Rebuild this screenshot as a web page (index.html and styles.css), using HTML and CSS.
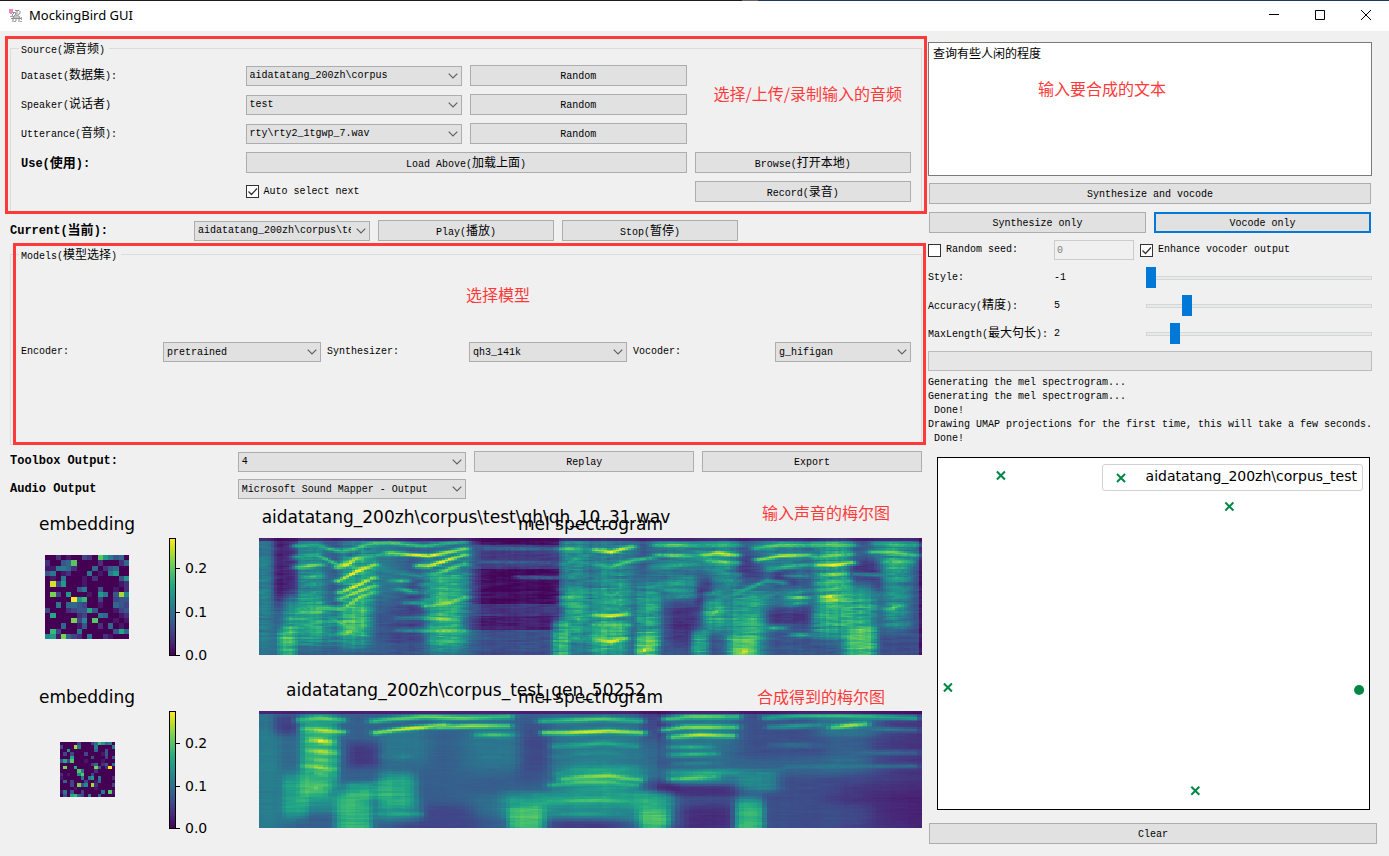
FILE: index.html
```html
<!DOCTYPE html>
<html lang="zh-CN">
<head>
<meta charset="utf-8">
<title>MockingBird GUI</title>
<link rel="stylesheet" href="styles.css">
</head>
<body>
<header class="titlebar">
  <svg class="app-icon" width="14" height="14" viewBox="0 0 14 14" aria-hidden="true">
    <g fill="none" stroke="#8c8c8c">
      <path d="M4 3.5h2M6 1.5h4l1 1v2l-2 1M3 6l3-3 1 2-3 3zM5 7h5l1 2H4zM4 10v3M7 9v3M10 9v4M2 9.500h10M8 2v5"/>
    </g>
    <path d="M1 7h2v1H1zM12 8h1v3h-1zM5 12h2v1H5zM11 12h2v1h-2z" fill="#a5a5a5"/>
    <path d="M0 0h4v4H0z" fill="#f285c0"/><path d="M1 4h2v1H1z" fill="#c9a0b8"/>
  </svg>
  <h1>MockingBird GUI</h1>
  <div class="window-buttons">
    <button type="button" aria-label="Minimize"><svg width="10" height="10"><path d="M0 4.500h10"/></svg></button>
    <button type="button" aria-label="Maximize"><svg width="10" height="10"><path d="M.5.5h9v9h-9z"/></svg></button>
    <button type="button" aria-label="Close"><svg width="10" height="10"><path d="M0 0l10 10M10 0L0 10"/></svg></button>
  </div>
</header>

<main class="app">
  <section class="left">
    <div class="marked">
      <fieldset>
        <legend>Source(<span class="zh">源音频</span>)</legend>
        <div class="source-grid">
          <label for="dataset">Dataset(<span class="zh">数据集</span>):</label>
          <select id="dataset"><option>aidatatang_200zh\corpus</option></select>
          <button type="button">Random</button>
          <label class="first" for="speaker">Speaker(<span class="zh">说话者</span>)</label>
          <select id="speaker"><option>test</option></select>
          <button type="button">Random</button>
          <label class="first" for="utterance">Utterance(<span class="zh">音频</span>):</label>
          <select id="utterance"><option>rty\rty2_1tgwp_7.wav</option></select>
          <button type="button">Random</button>
          <strong class="first">Use(<span class="zh">使用</span>):</strong>
          <button type="button" class="wide">Load Above(<span class="zh">加载上面</span>)</button>
          <button type="button">Browse(<span class="zh">打开本地</span>)</button>
          <label class="check second"><input type="checkbox" checked>Auto select next</label>
          <button type="button" class="fourth">Record(<span class="zh">录音</span>)</button>
        </div>
      </fieldset>
      <div class="frame frame-source"></div>
      <p class="note note-source">选择/上传/录制输入的音频</p>
    </div>

    <div class="current-grid">
      <label for="current"><strong>Current(<span class="zh">当前</span>):</strong></label>
      <select id="current"><option>aidatatang_200zh\corpus\test</option></select>
      <button type="button">Play(<span class="zh">播放</span>)</button>
      <button type="button">Stop(<span class="zh">暂停</span>)</button>
    </div>

    <div class="marked">
      <fieldset class="models">
        <legend>Models(<span class="zh">模型选择</span>)</legend>
        <div class="models-grid">
          <label for="encoder">Encoder:</label>
          <select id="encoder"><option>pretrained</option></select>
          <label for="synthesizer">Synthesizer:</label>
          <select id="synthesizer"><option>qh3_141k</option></select>
          <label for="vocoder">Vocoder:</label>
          <select id="vocoder"><option>g_hifigan</option></select>
        </div>
      </fieldset>
      <div class="frame frame-models"></div>
      <p class="note note-models">选择模型</p>
    </div>

    <div class="output-grid">
      <label for="toolbox"><strong>Toolbox Output:</strong></label>
      <select id="toolbox"><option>4</option></select>
      <button type="button">Replay</button>
      <button type="button">Export</button>
      <label for="audio"><strong>Audio Output</strong></label>
      <select id="audio"><option>Microsoft Sound Mapper - Output</option></select>
    </div>

    <figure class="plots">
      <h2 class="suptitle">aidatatang_200zh\corpus\test\qh\qh_10_31.wav</h2>
      <h3 class="axes-title">embedding</h3>
      <h3 class="axes-title mel-title">mel spectrogram</h3>
      <canvas class="embedding" id="emb1" width="16" height="16"></canvas>
      <div class="colorbar">
        <span class="tick" style="bottom:75%">0.2</span><span class="tick" style="bottom:37.500%">0.1</span><span class="tick" style="bottom:0%">0.0</span>
      </div>
      <canvas class="mel" id="mel1" width="221" height="80"></canvas>
      <figcaption class="note note-plot">输入声音的梅尔图</figcaption>
    </figure>

    <figure class="plots">
      <h2 class="suptitle">aidatatang_200zh\corpus_test_gen_50252</h2>
      <h3 class="axes-title">embedding</h3>
      <h3 class="axes-title mel-title">mel spectrogram</h3>
      <canvas class="embedding small" id="emb2" width="16" height="16"></canvas>
      <div class="colorbar">
        <span class="tick" style="bottom:73%">0.2</span><span class="tick" style="bottom:36.500%">0.1</span><span class="tick" style="bottom:0%">0.0</span>
      </div>
      <canvas class="mel" id="mel2" width="145" height="80"></canvas>
      <figcaption class="note note-plot note-result">合成得到的梅尔图</figcaption>
    </figure>
  </section>

  <section class="right">
    <div class="controls">
      <div class="prompt">
        <textarea aria-label="Text">查询有些人闲的程度</textarea>
        <p class="note note-text">输入要合成的文本</p>
      </div>
      <div class="actions">
        <button type="button" class="both">Synthesize and vocode</button>
        <button type="button">Synthesize only</button>
        <button type="button" class="default">Vocode only</button>
      </div>
      <div class="options">
        <label class="check"><input type="checkbox">Random seed:</label>
        <input class="seed" type="text" value="0" disabled aria-label="Seed">
        <label class="check"><input type="checkbox" checked>Enhance vocoder output</label>
        <label for="style">Style:</label><output class="number">-1</output>
        <input id="style" type="range" min="-1" max="9" value="-1">
        <label for="accuracy">Accuracy(<span class="zh">精度</span>):</label><output class="number">5</output>
        <input id="accuracy" type="range" min="3" max="15" value="5">
        <label for="maxlen">MaxLength(<span class="zh">最大句长</span>):</label><output class="number">2</output>
        <input id="maxlen" type="range" min="1" max="10" value="2">
      </div>
      <div class="progress" role="progressbar" aria-label="Progress"></div>
    </div>
    <pre class="log">Generating the mel spectrogram...
Generating the mel spectrogram...
 Done!
Drawing UMAP projections for the first time, this will take a few seconds.
 Done!</pre>
    <div class="umap">
      <svg width="100%" height="100%" aria-hidden="true">
        <svg x="14.600%" y="5%"><path d="M-4-4l8 8M4-4l-8 8"/></svg>
        <svg x="67.600%" y="13.800%"><path d="M-4-4l8 8M4-4l-8 8"/></svg>
        <svg x="2.300%" y="65.400%"><path d="M-4-4l8 8M4-4l-8 8"/></svg>
        <svg x="59.700%" y="94.800%"><path d="M-4-4l8 8M4-4l-8 8"/></svg>
        <circle cx="97.700%" cy="66.100%" r="5"/>
      </svg>
      <div class="legend">
        <svg width="10" height="10" aria-hidden="true"><path d="M1 1l8 8M9 1L1 9"/></svg>
        <span>aidatatang_200zh\corpus_test</span>
      </div>
    </div>
    <button type="button">Clear</button>
  </section>
</main>
<script src="plots.js"></script>
</body>
</html>
```
FILE: styles.css
```css
* { box-sizing: border-box; }

body {
  margin: 0;
  min-height: 100vh;
  background: #f0f0f0;
  color: #000;
  font: 10px/14px "Liberation Mono", "Noto Sans CJK SC", monospace;
}

h1, h2, h3, p, pre, figure, fieldset { margin: 0; padding: 0; font-weight: 400; }

.zh { font: 12px/14px "Noto Sans CJK SC", sans-serif; }
strong { font-size: 12px; }
strong .zh { font-size: 13px; font-weight: 700; }

.titlebar {
  display: flex;
  align-items: center;
  height: 31px;
  padding-left: 9px;
  background: #fff;
  border-top: 1px solid;
  border-image: linear-gradient(90deg, #1c1c1c 53.4%, #666 53.4% 54.6%, #1f3a5f 54.6%) 1;
}
.titlebar h1 { flex: 1; margin-left: 6px; padding-bottom: 2px; font: 13px/20px "Noto Sans", sans-serif; }
.window-buttons { display: flex; }
.window-buttons button {
  display: grid;
  place-items: center;
  width: 46px;
  height: 30px;
  padding: 0 0 2px;
  border: 0;
  background: none;
}
.window-buttons path { fill: none; stroke: #000; }

.app {
  display: grid;
  grid-template-columns: 912fr 449fr;
  gap: 6px;
  padding: 10px 12px 11px 10px;
}
.left { display: flex; flex-direction: column; gap: 6px; min-width: 0; }
.right { display: flex; flex-direction: column; min-width: 0; padding: 1px 0; }

button, select {
  min-width: 0;
  width: 100%;
  height: 21px;
  padding: 2px 0 0;
  border: 1px solid #adadad;
  border-radius: 0;
  background: #e1e1e1;
  color: #000;
  font: inherit;
}
select {
  height: 20px;
  padding: 1px 18px 0 3px;
  appearance: none;
  background: #e1e1e1 url("data:image/svg+xml,%3Csvg xmlns='http://www.w3.org/2000/svg' width='10' height='6'%3E%3Cpath d='M.7.7L5 5L9.300.7' fill='none' stroke='%23606060' stroke-width='1.200'/%3E%3C/svg%3E") no-repeat right 3px center;
}
button.default { border: 2px solid #0078d7; }

.marked { position: relative; }
.frame { position: absolute; border: 3px solid #fc3a3a; pointer-events: none; }
.frame-source { inset: -5px -5px 0; }
.frame-models { inset: -4px -4px 0 3px; }
.note {
  position: absolute;
  color: #fc3a3a;
  font: 16px/24px "Noto Sans CJK SC", sans-serif;
  white-space: nowrap;
}
.note-source { top: 40px; right: 20px; }
.note-models { top: 35px; left: 50%; }
.note-plot { top: -5px; right: 32px; }
.note-result { top: 6px; right: 37px; }
.note-text { top: 34px; left: 110px; }

fieldset { min-width: 0; border: 1px solid #dcdcdc; padding: 10px 10px 11px 10px; }
legend { margin-left: -2px; padding: 0 4px 0 2px; height: 14px; line-height: 12px; }
.source-grid {
  display: grid;
  grid-template-columns: repeat(4, 1fr);
  grid-auto-rows: 21px;
  gap: 8px;
  align-items: center;
}
.first { grid-column: 1; }
.second { grid-column: 2; }
.fourth { grid-column: 4; }
.wide { grid-column: 2 / 4; }

.check { display: flex; align-items: center; gap: 5px; }
input[type="checkbox"] {
  appearance: none;
  width: 13px;
  height: 13px;
  margin: 0;
  border: 1px solid #333;
  background: #fff;
}
input[type="checkbox"]:checked {
  background: #fff url("data:image/svg+xml,%3Csvg xmlns='http://www.w3.org/2000/svg' width='11' height='11'%3E%3Cpath d='M1.500 5.500l3 3L10 2.500' fill='none' stroke='%23333' stroke-width='1.300'/%3E%3C/svg%3E") center no-repeat;
}

.current-grid { display: grid; grid-template-columns: repeat(5, 1fr); gap: 8px; align-items: center; }
.models { height: 198px; }
.models-grid {
  display: grid;
  grid-template-columns: 136fr 158fr 136fr 158fr 136fr 136fr;
  gap: 6px;
  align-items: center;
  height: 162px;
}
.output-grid {
  display: grid;
  grid-template-columns: 220fr 229fr 220fr 220fr;
  gap: 7px 8px;
  align-items: center;
}

.plots {
  position: relative;
  display: grid;
  grid-template-columns: 154fr 95fr 663fr;
  grid-template-rows: 20px 117px;
  row-gap: 4px;
  height: 167px;
  padding-top: 9px;
  font-family: "DejaVu Sans", sans-serif;
}
.suptitle {
  position: absolute;
  top: 2px;
  width: 100%;
  text-align: center;
  font-size: 17px;
  line-height: 20px;
}
.axes-title { text-align: center; font-size: 17px; line-height: 20px; }
.mel-title { grid-column: 3; }
canvas { image-rendering: pixelated; }
.embedding { width: 84px; height: 84px; place-self: center; }
.embedding.small { width: 55px; height: 55px; }
.mel { width: 100%; height: 117px; }
.colorbar {
  position: relative;
  width: 7px;
  height: 118px;
  margin-left: 5px;
  border: 1px solid #000;
  background: linear-gradient(0deg, #440154, #482475, #414487, #355f8d, #2a788e, #21918c, #22a884, #44bf70, #7ad151, #bddf26, #fde725);
}
.tick {
  position: absolute;
  left: 15px;
  transform: translateY(50%);
  font-size: 14px;
  line-height: 16px;
}
.tick::before {
  content: "";
  position: absolute;
  top: 8px;
  left: -9px;
  width: 4px;
  height: 1px;
  background: #000;
}

.controls { display: grid; gap: 7px; margin-right: 5px; }
.prompt { position: relative; height: 134px; }
textarea {
  display: block;
  width: 100%;
  height: 100%;
  padding: 2px 4px;
  border: 1px solid #7a7a7a;
  background: #fff;
  color: #000;
  resize: none;
  font: 12px/15px "Noto Sans CJK SC", sans-serif;
}
.actions { display: grid; grid-template-columns: 1fr 1fr; gap: 8px; margin: 0 1px; }
.both { grid-column: 1 / 3; }
.options {
  display: grid;
  grid-template-columns: 120px 80px 1fr;
  grid-template-rows: 20px 21px 21px 21px;
  gap: 7px 6px;
  align-items: center;
  white-space: nowrap;
}
.seed {
  width: 100%;
  height: 20px;
  padding: 0 2px;
  border: 1px solid #ccc;
  background: #f0f0f0;
  color: #838383;
  font: inherit;
}
input[type="range"] {
  appearance: none;
  height: 21px;
  margin: 0 0 0 6px;
  background: none;
}
input[type="range"]::-webkit-slider-runnable-track {
  height: 4px;
  border: 1px solid #d6d6d6;
  background: #e7eaea;
}
input[type="range"]::-webkit-slider-thumb {
  appearance: none;
  width: 10px;
  height: 21px;
  margin: -10px -1px 0;
  background: #0078d7;
}
.progress { height: 20px; border: 1px solid #bcbcbc; background: #e6e6e6; }
.log { margin-top: 5px; font: inherit; }
.umap {
  position: relative;
  flex: 1;
  min-height: 200px;
  margin: 11px 7px 13px 9px;
  border: 1px solid #000;
  background: #fff;
}
.umap > svg { position: absolute; inset: 0; }
.umap svg { overflow: visible; }
.umap path { fill: none; stroke: #008744; stroke-width: 2; }
.umap circle { fill: #008744; }
.legend {
  position: absolute;
  top: 6px;
  right: 6px;
  display: flex;
  align-items: center;
  gap: 20px;
  height: 27px;
  padding: 0 5px 0 13px;
  border: 1px solid #d2d2d2;
  border-radius: 3px;
  font: 14px/20px "DejaVu Sans", sans-serif;
}
.legend span { padding-bottom: 4px; }
.right > button { margin-left: 1px; width: auto; }
```
FILE: plots.js
```js
const VIRIDIS = [
  [68, 1, 84], [72, 36, 117], [65, 68, 135], [53, 95, 141], [42, 120, 142],
  [33, 145, 140], [34, 168, 132], [68, 191, 112], [122, 209, 81], [189, 223, 38], [253, 231, 37]
];

function color(v) {
  const t = Math.max(0, Math.min(0.9999, v)) * 10;
  const i = Math.floor(t), f = t - i;
  return VIRIDIS[i].map((c, k) => c + (VIRIDIS[i + 1][k] - c) * f);
}

function paint(id, value) {
  const canvas = document.getElementById(id);
  const ctx = canvas.getContext("2d");
  const image = ctx.createImageData(canvas.width, canvas.height);
  for (let y = 0; y < canvas.height; y++) {
    for (let x = 0; x < canvas.width; x++) {
      image.data.set([...color(value(x, y)), 255], (y * canvas.width + x) * 4);
    }
  }
  ctx.putImageData(image, 0, 0);
}

const emb1 = [
  "0020100320b86450", "20045b0000200025", "1166520005024500", "4601200060106800",
  "0106000102000048", "0e38000100000012", "0000004600400102", "0c308000108604d7",
  "00000f8a00300344", "0060554300100543", "3000234494000134", "0900002300650012",
  "00000c370b000101", "0005001400205010", "0a30006000000495", "781c532060021000"
];
const emb2 = [
  "00000300035a8560", "3000d60000600006", "0080000000500400", "0303000300001400",
  "0009000004000304", "493b000100001000", "0000000003502405", "0c00900000c402f0",
  "00000b6000200000", "201007b003000000", "1000006068060002", "0503000300150000",
  "00030c470d200003", "0000100000100000", "16040030000060b1", "0409a53070050000"
];
paint("emb1", (x, y) => parseInt(emb1[y][x], 16) / 15);
paint("emb2", (x, y) => parseInt(emb2[y][x], 16) / 15);

function noise(x, y) {
  const s = Math.sin(x * 127.1 + y * 311.7) * 43758.5453;
  return s - Math.floor(s) - 0.5;
}
function smoothNoise(x, y) {
  const i = Math.floor(x), f = x - i;
  return noise(i, y) * (1 - f) + noise(i + 1, y) * f;
}

// areas: [x, y, rx, ry, amount]; lines: [level, x0, y0, x1, y1, ...]
function mel(id, base, grain, thickness, areas, lines) {
  const { width, height } = document.getElementById(id);
  paint(id, (cx, cy) => {
    const x = (cx + 0.5) * 663 / width, y = (cy + 0.5) * 117 / height;
    let v = base(x, y), gain = 0;
    for (const [ax, ay, rx, ry, amount] of areas) {
      const dx = ((x - ax) / rx) ** 2, dy = ((y - ay) / ry) ** 2;
      if (dx < 4 && dy < 4) gain += amount * Math.exp(-0.7 * (dx * dx + dy * dy));
    }
    v += gain > 0 ? (0.82 - v) * (1 - Math.exp(-gain * 1.9)) : gain;
    const loud = Math.min(1, Math.max(0.35, gain * 4));
    v += grain * loud * (1.2 * smoothNoise(cx / 5, cy) + 0.6 * smoothNoise(cx / 11, (cy >> 1) + 40) + 0.5 * noise(cx, 7) + 0.5 * smoothNoise(cx / 2, cy + 90));
    for (const [level, ...p] of lines) {
      const last = p.length - 2;
      if (x < p[0] - 14 || x > p[last] + 14) continue;
      let k = 0;
      while (k < last - 2 && x > p[k + 2]) k += 2;
      const t = Math.max(0, Math.min(1, (x - p[k]) / (p[k + 2] - p[k])));
      const ly = p[k + 1] + (p[k + 3] - p[k + 1]) * t;
      const out = Math.max(0, p[0] - x, x - p[last]);
      const w = Math.exp(-(((y - ly) / thickness) ** 2) - (out / 6) ** 2);
      const place = (x - p[0]) / (p[last] - p[0]);
      const middle = Math.sin(Math.PI * Math.max(0.1, Math.min(0.9, place)));
      v += Math.max(0, level * (0.78 + 0.22 * middle) + 0.5 * grain * noise(cx, cy) - v) * w;
    }
    if (y < 3) v *= 0.3;
    return Math.min(1, Math.max(0.01, v));
  });
}

function ramp(x, from, to) {
  return Math.max(0, Math.min(1, (x - from) / (to - from)));
}

mel("mel1", (x, y) => {
  if (x > 659) return 0.06;
  const quiet = ramp(x, 200, 214) * (1 - ramp(x, 298, 302));
  const floor = y > 92 ? 0.24 : y > 78 ? 0.08 : y > 66 ? 0.16 : y > 30 ? 0.03 : y > 8 ? 0.16 : 0.04;
  const voiced = x < 38 ? 0.32 - 0.22 * ramp(x, 10, 18) * (1 - ramp(y, 55, 80)) : 0.27;
  return voiced + (floor - voiced) * quiet;
}, 0.17, 2.2, [
  [5, 60, 8, 58, 0.12], [28, 106, 8, 14, 0.55], [45, 82, 18, 24, 0.34], [52, 40, 14, 40, 0.2],
  [75, 88, 24, 18, 0.22], [98, 55, 15, 46, 0.38], [97, 84, 12, 17, 0.3], [125, 30, 20, 34, 0.12],
  [187, 74, 17, 36, 0.5], [187, 28, 22, 16, 0.12], [150, 78, 20, 30, -0.06], [211, 50, 10, 60, 0.12],
  [302, 102, 8, 18, 0.42], [316, 20, 12, 22, 0.25], [317, 66, 10, 18, 0.42], [315, 98, 12, 16, 0.26],
  [350, 102, 17, 14, 0.6], [350, 70, 20, 20, 0.3], [352, 28, 22, 28, 0.2], [390, 80, 11, 32, 0.42],
  [388, 110, 10, 12, 0.6], [420, 22, 25, 22, 0.14], [420, 52, 20, 12, 0.14], [425, 86, 14, 22, -0.12],
  [441, 108, 8, 14, 0.45], [455, 74, 10, 18, 0.42], [460, 22, 18, 24, 0.2], [487, 84, 18, 36, 0.42],
  [485, 110, 12, 14, 0.6], [445, 50, 8, 18, -0.18], [490, 35, 14, 18, -0.14], [522, 15, 25, 18, 0.16],
  [525, 40, 12, 9, -0.12], [530, 78, 26, 8, -0.12], [520, 60, 18, 12, 0.1], [573, 40, 16, 46, 0.32],
  [568, 86, 14, 14, 0.26], [600, 84, 16, 36, 0.45], [602, 106, 12, 14, 0.5], [604, 38, 18, 14, -0.16],
  [637, 55, 13, 36, 0.24], [637, 15, 20, 14, 0.16], [640, 102, 18, 15, -0.05]
], [
  [0.72, 38, 8, 58, 7, 70, 11, 82, 13, 95, 11, 110, 6, 130, 5, 165, 8, 205, 4],
  [0.7, 38, 19, 58, 17, 72, 24, 80, 27, 90, 24, 100, 20, 125, 16],
  [0.97, 132, 15, 170, 18, 190, 14, 205, 11], [0.85, 40, 29, 60, 27], [0.75, 48, 39, 60, 38],
  [0.6, 48, 47, 60, 46], [0.55, 48, 55, 62, 54],
  [1, 80, 29, 90, 26, 98, 20], [1, 80, 43, 98, 33, 115, 27], [0.97, 82, 54, 100, 47, 114, 40],
  [0.9, 82, 61, 100, 53, 115, 48], [0.85, 84, 71, 100, 60, 114, 54], [0.72, 42, 71, 68, 70, 85, 71, 92, 68],
  [0.75, 75, 82, 90, 89, 100, 80], [0.84, 84, 95, 95, 93], [0.55, 40, 82, 60, 80],
  [0.7, 135, 43, 147, 43], [0.5, 135, 35, 160, 38, 195, 34], [0.65, 140, 51, 155, 54],
  [0.55, 148, 65, 175, 65], [0.45, 140, 80, 175, 79], [0.48, 140, 92, 175, 93],
  [0.98, 160, 28, 170, 28, 183, 24, 205, 17], [0.8, 176, 36, 185, 33, 205, 26], [0.6, 165, 47, 185, 43, 205, 36],
  [0.6, 168, 54, 205, 45], [0.65, 168, 62, 205, 52], [0.85, 168, 68, 190, 65, 205, 60],
  [0.85, 170, 80, 195, 82], [0.8, 168, 93, 203, 93], [0.72, 175, 103, 202, 104],
  [0.35, 215, 10, 295, 11], [0.3, 215, 24, 295, 25], [0.3, 260, 39, 300, 40],
  [0.78, 304, 11, 318, 11], [0.6, 306, 26, 325, 18], [0.55, 307, 39, 320, 39], [0.55, 306, 51, 318, 51],
  [0.75, 306, 60, 318, 59], [0.7, 306, 66, 324, 68], [0.7, 314, 80, 324, 82], [0.65, 308, 91, 325, 91],
  [0.6, 308, 100, 325, 101], [0.97, 337, 12, 352, 14, 372, 9], [0.72, 340, 27, 352, 29, 372, 23, 392, 20],
  [0.55, 340, 43, 360, 45], [0.65, 338, 55, 352, 57, 368, 53], [0.65, 338, 64, 368, 64],
  [0.6, 338, 71, 368, 71], [0.98, 338, 77, 352, 78, 366, 76], [0.78, 336, 87, 368, 87],
  [0.97, 340, 102, 352, 104, 364, 101], [0.98, 383, 113, 389, 111],
  [0.78, 398, 7, 435, 7], [0.8, 400, 17, 432, 18], [0.62, 395, 29, 412, 28, 435, 26], [0.62, 403, 45, 430, 46],
  [0.6, 405, 52, 430, 53], [0.52, 410, 59, 432, 58], [0.68, 443, 7, 477, 7], [0.97, 446, 17, 458, 15, 476, 17],
  [0.8, 450, 23, 476, 25], [0.55, 450, 31, 477, 37], [0.55, 460, 42, 477, 43], [0.55, 450, 56, 465, 53],
  [0.8, 452, 76, 460, 72], [0.6, 462, 62, 490, 50, 508, 43, 524, 45], [0.5, 495, 62, 520, 55],
  [0.96, 480, 114, 492, 113], [0.78, 498, 10, 520, 7, 555, 7], [0.92, 500, 22, 520, 18, 548, 17],
  [0.68, 512, 31, 525, 29, 548, 27], [0.52, 530, 38, 547, 38], [0.55, 530, 55, 548, 53],
  [0.83, 532, 60, 547, 60], [0.6, 532, 66, 546, 65], [0.62, 508, 90, 522, 90], [0.65, 536, 97, 548, 97],
  [0.8, 557, 7, 592, 7], [0.8, 557, 19, 590, 16], [1, 560, 27, 575, 27, 592, 25], [0.85, 565, 37, 585, 36],
  [0.75, 562, 45, 588, 43], [0.75, 562, 52, 588, 50], [0.97, 565, 59, 577, 58], [0.92, 565, 63, 582, 62],
  [0.72, 565, 69, 584, 68], [0.45, 590, 36, 650, 38], [0.5, 590, 56, 620, 57],
  [0.8, 614, 14, 635, 14, 655, 17], [0.7, 618, 6, 655, 7], [0.76, 628, 24, 650, 24], [0.58, 630, 33, 645, 33],
  [0.62, 630, 41, 646, 41], [0.55, 632, 50, 646, 50], [0.55, 630, 58, 646, 58], [0.78, 630, 71, 640, 68],
  [0.55, 628, 87, 648, 86]
]);

mel("mel2", (x) => (x < 36 ? 0.34 : x < 400 ? 0.3 : x < 560 ? 0.24 : 0.24 - (x - 560) * 0.0009), 0.06, 2.5, [
  [8, 70, 12, 60, 0.1], [26, 14, 12, 10, -0.16], [60, 46, 17, 36, 0.55], [56, 78, 12, 8, 0.35],
  [36, 85, 12, 20, 0.34], [62, 94, 26, 8, 0.16], [95, 106, 16, 24, 0.6], [138, 80, 17, 16, 0.48],
  [108, 80, 20, 8, 0.3], [140, 100, 22, 10, 0.2], [105, 44, 16, 12, -0.14], [145, 36, 25, 18, 0.1],
  [180, 112, 40, 18, -0.1], [235, 38, 30, 22, 0.1], [240, 95, 30, 10, 0.08], [268, 110, 16, 14, 0.7],
  [268, 94, 24, 12, 0.2], [275, 40, 16, 25, -0.1], [342, 42, 45, 30, 0.12], [342, 70, 38, 14, 0.28],
  [340, 90, 60, 8, 0.3], [340, 104, 50, 6, 0.14], [325, 114, 35, 7, -0.12], [395, 76, 22, 8, -0.12],
  [395, 112, 13, 12, 0.6], [395, 96, 18, 16, 0.28], [442, 26, 36, 22, 0.14], [440, 65, 35, 8, 0.2],
  [440, 80, 45, 6, -0.1], [450, 108, 25, 14, -0.12], [490, 112, 13, 22, 0.7], [498, 70, 20, 10, 0.24],
  [395, 12, 14, 18, -0.12], [530, 55, 80, 9, 0.07], [590, 15, 30, 10, 0.16], [590, 42, 22, 18, 0.08],
  [625, 98, 60, 22, -0.06], [590, 105, 25, 12, 0.06]
], [
  [0.78, 42, 9, 60, 7, 82, 9], [0.92, 48, 18, 70, 20, 82, 21], [1, 55, 29, 70, 31], [0.9, 52, 40, 74, 42],
  [0.78, 50, 48, 73, 50], [0.88, 48, 55, 72, 58], [0.72, 52, 62, 72, 64], [0.76, 48, 77, 66, 77],
  [0.82, 115, 10, 135, 8, 165, 6, 205, 7, 250, 6], [0.95, 118, 22, 135, 19, 165, 16, 185, 14],
  [0.88, 180, 16, 210, 15, 248, 15], [0.72, 220, 24, 250, 24], [0.65, 97, 82, 115, 82], [0.62, 122, 103, 158, 103],
  [0.45, 130, 46, 160, 45], [0.42, 215, 47, 250, 46], [0.74, 284, 10, 320, 9, 345, 8, 380, 10],
  [0.95, 287, 22, 310, 22, 350, 20, 382, 22], [0.62, 297, 35, 320, 34, 345, 32, 375, 35],
  [0.48, 297, 46, 320, 43, 345, 42, 378, 45], [0.45, 297, 55, 320, 52, 345, 51, 378, 54],
  [0.6, 300, 63, 320, 60, 345, 59, 380, 64], [0.84, 305, 68, 325, 66, 350, 65, 380, 69],
  [0.74, 294, 74, 320, 71, 350, 71, 375, 74], [0.55, 297, 81, 345, 78, 375, 81],
  [0.72, 290, 90, 345, 89, 375, 91], [0.56, 290, 103, 360, 103],
  [0.8, 408, 8, 430, 6, 477, 6], [0.86, 407, 19, 425, 16, 475, 16], [0.9, 414, 26, 440, 24, 472, 25],
  [0.62, 414, 36, 450, 36], [0.66, 414, 44, 455, 43], [0.45, 416, 53, 460, 52], [0.62, 414, 62, 475, 62],
  [0.78, 414, 68, 455, 66], [0.4, 490, 65, 530, 56, 655, 55],
  [0.68, 508, 7, 540, 5, 580, 5, 655, 7], [0.55, 512, 16, 560, 14], [0.88, 575, 16, 605, 13],
  [0.42, 600, 18, 655, 19], [0.36, 512, 34, 560, 34], [0.36, 575, 42, 655, 42]
]);
```
